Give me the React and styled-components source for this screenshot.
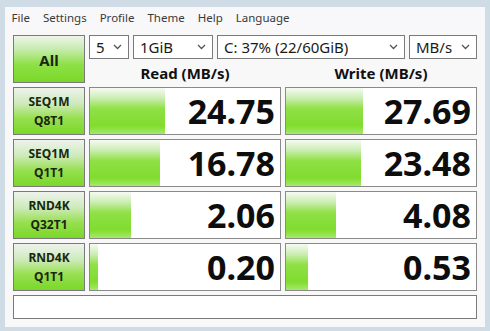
import React from "react";
import styled, { createGlobalStyle } from "styled-components";

const TESTS = [
  { name: "SEQ1M", sub: "Q8T1", read: "24.75", write: "27.69", rw: 75, ww: 77 },
  { name: "SEQ1M", sub: "Q1T1", read: "16.78", write: "23.48", rw: 70, ww: 75 },
  { name: "RND4K", sub: "Q32T1", read: "2.06", write: "4.08", rw: 41, ww: 50 },
  { name: "RND4K", sub: "Q1T1", read: "0.20", write: "0.53", rw: 8, ww: 22 },
];

const MENU = ["File", "Settings", "Profile", "Theme", "Help", "Language"];

const Chevron = () => (
  <svg width="9" height="6" viewBox="0 0 9 6">
    <polyline points="1,1 4.5,4.5 8,1" fill="none" stroke="#555" strokeWidth="1.3" />
  </svg>
);

export default function App() {
  return (
    <>
      <GlobalStyle />
      <Window>
        <MenuBar>
          {MENU.map((m) => (
            <MenuItem key={m}>{m}</MenuItem>
          ))}
        </MenuBar>
        <Client>
          <Grid>
            <AllButton>All</AllButton>
            <TopArea>
              <Combos>
                <Combo $w={40}>
                  <span>5</span>
                  <Chevron />
                </Combo>
                <Combo $w={80}>
                  <span>1GiB</span>
                  <Chevron />
                </Combo>
                <Combo $grow>
                  <span>C: 37% (22/60GiB)</span>
                  <Chevron />
                </Combo>
                <Combo $w={68}>
                  <span>MB/s</span>
                  <Chevron />
                </Combo>
              </Combos>
              <Headers>
                <HeaderText>Read (MB/s)</HeaderText>
                <HeaderText>Write (MB/s)</HeaderText>
              </Headers>
            </TopArea>
            {TESTS.map((t, i) => (
              <React.Fragment key={i}>
                <TestButton>
                  <span>{t.name}</span>
                  <span>{t.sub}</span>
                </TestButton>
                <Meter>
                  <Bar style={{ width: t.rw }} />
                  <Value>{t.read}</Value>
                </Meter>
                <Meter>
                  <Bar style={{ width: t.ww }} />
                  <Value>{t.write}</Value>
                </Meter>
              </React.Fragment>
            ))}
            <StatusBox />
          </Grid>
        </Client>
      </Window>
    </>
  );
}

const GlobalStyle = createGlobalStyle`
  body {
    margin: 0;
    background: #cfdce5;
    font-family: "Noto Sans", "Open Sans", sans-serif;
  }
`;

const Window = styled.div`
  width: 490px;
  height: 331px;
  box-sizing: border-box;
  padding: 7px 5px 4px 5px;
  background: #cfdce5;
  display: flex;
  flex-direction: column;
`;

const MenuBar = styled.div`
  height: 20px;
  background: #f8f7f9;
  display: flex;
  align-items: center;
`;

const MenuItem = styled.span`
  font-size: 11.5px;
  color: #3a3a3a;
  padding: 0 6.5px;
`;

const Client = styled.div`
  flex: 1;
  background: #f8f8f8;
  padding: 8px 8px 0 8px;
`;

const Grid = styled.div`
  display: grid;
  grid-template-columns: 72px 192px 192px;
  grid-template-rows: 48px repeat(4, 48px) 24px;
  column-gap: 4px;
  row-gap: 4px;
`;

const AllButton = styled.div`
  box-sizing: border-box;
  border: 1px solid #7a7a7a;
  background: linear-gradient(#eef4ea 0%, #c4ebab 30%, #8ee046 62%, #7ad827 100%);
  display: flex;
  align-items: center;
  justify-content: center;
  padding-top: 2px;
  font-weight: 700;
  font-size: 15px;
  color: #1b2612;
`;

const TopArea = styled.div`
  grid-column: 2 / 4;
  display: flex;
  flex-direction: column;
`;

const Combos = styled.div`
  display: flex;
  gap: 4px;
  height: 24px;
`;

const Combo = styled.div`
  box-sizing: border-box;
  width: ${(p) => (p.$w ? `${p.$w}px` : "auto")};
  flex: ${(p) => (p.$grow ? 1 : "none")};
  border: 1px solid #7a7a7a;
  background: #fff;
  display: flex;
  align-items: center;
  justify-content: space-between;
  padding: 0 6px;
  font-size: 15px;
  color: #1a1a1a;
`;

const Headers = styled.div`
  flex: 1;
  display: grid;
  grid-template-columns: 1fr 1fr;
  column-gap: 4px;
  align-items: center;
`;

const HeaderText = styled.div`
  text-align: center;
  font-weight: 700;
  font-size: 15px;
  color: #111;
  padding-top: 4px;
`;

const TestButton = styled.div`
  box-sizing: border-box;
  border: 1px solid #7a7a7a;
  background: linear-gradient(#eef3ec 0%, #cdeab8 35%, #98e052 65%, #7ad827 100%);
  display: flex;
  flex-direction: column;
  align-items: center;
  justify-content: center;
  font-weight: 700;
  font-size: 12px;
  line-height: 19px;
  color: #1b2612;
`;

const Meter = styled.div`
  position: relative;
  box-sizing: border-box;
  border: 1px solid #8a8a8a;
  background: #fff;
  display: flex;
  align-items: center;
  justify-content: flex-end;
  padding-right: 5px;
`;

const Bar = styled.div`
  position: absolute;
  left: 0;
  top: 0;
  bottom: 0;
  background: linear-gradient(#f6faf3 0%, #cbeeb2 22%, #8fe045 45%, #80dc2e 82%, #a6ea6a 100%);
`;

const Value = styled.span`
  position: relative;
  font-weight: 700;
  font-size: 34px;
  line-height: 1;
  color: #0d0d0d;
`;

const StatusBox = styled.div`
  grid-column: 1 / 4;
  box-sizing: border-box;
  border: 1px solid #7a7a7a;
  background: #fff;
`;
